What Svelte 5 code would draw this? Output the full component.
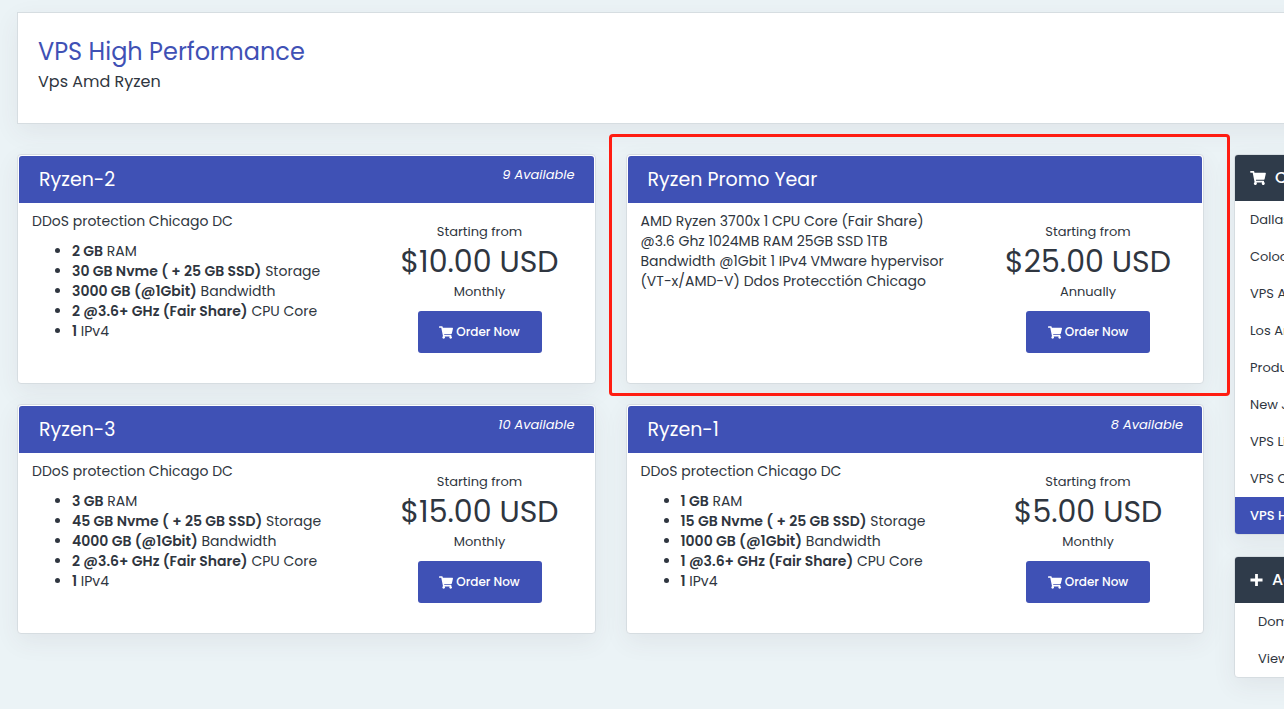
<script lang="ts">
	type Feature = { amount: string; label: string };

	type Product = {
		name: string;
		stock?: number;
		description: string;
		features: Feature[];
		price: string;
		cycle: string;
		promo?: boolean;
	};

	const products: Product[] = [
		{
			name: 'Ryzen-2',
			stock: 9,
			description: 'DDoS protection Chicago DC',
			features: [
				{ amount: '2 GB', label: 'RAM' },
				{ amount: '30 GB Nvme ( + 25 GB SSD)', label: 'Storage' },
				{ amount: '3000 GB (@1Gbit)', label: 'Bandwidth' },
				{ amount: '2 @3.6+ GHz (Fair Share)', label: 'CPU Core' },
				{ amount: '1', label: 'IPv4' }
			],
			price: '$10.00 USD',
			cycle: 'Monthly'
		},
		{
			name: 'Ryzen Promo Year',
			description:
				'AMD Ryzen 3700x 1 CPU Core (Fair Share)\n@3.6 Ghz 1024MB RAM 25GB SSD 1TB\nBandwidth @1Gbit 1 IPv4 VMware hypervisor\n(VT-x/AMD-V) Ddos Protecctión Chicago',
			features: [],
			price: '$25.00 USD',
			cycle: 'Annually',
			promo: true
		},
		{
			name: 'Ryzen-3',
			stock: 10,
			description: 'DDoS protection Chicago DC',
			features: [
				{ amount: '3 GB', label: 'RAM' },
				{ amount: '45 GB Nvme ( + 25 GB SSD)', label: 'Storage' },
				{ amount: '4000 GB (@1Gbit)', label: 'Bandwidth' },
				{ amount: '2 @3.6+ GHz (Fair Share)', label: 'CPU Core' },
				{ amount: '1', label: 'IPv4' }
			],
			price: '$15.00 USD',
			cycle: 'Monthly'
		},
		{
			name: 'Ryzen-1',
			stock: 8,
			description: 'DDoS protection Chicago DC',
			features: [
				{ amount: '1 GB', label: 'RAM' },
				{ amount: '15 GB Nvme ( + 25 GB SSD)', label: 'Storage' },
				{ amount: '1000 GB (@1Gbit)', label: 'Bandwidth' },
				{ amount: '1 @3.6+ GHz (Fair Share)', label: 'CPU Core' },
				{ amount: '1', label: 'IPv4' }
			],
			price: '$5.00 USD',
			cycle: 'Monthly'
		}
	];

	const categories = [
		'Dallas Dedicated',
		'Colocation',
		'VPS Atlanta',
		'Los Angeles',
		'Product Addons',
		'New Jersey',
		'VPS Linux',
		'VPS Chicago',
		'VPS High Performance'
	];

	const actions = ['Domain Renewals', 'View Cart'];

	let current = $state('VPS High Performance');
</script>

{#snippet cart()}
	<svg class="icon" viewBox="0 0 576 512" aria-hidden="true">
		<path
			d="M528.12 301.319l47.273-208C578.806 78.301 567.391 64 551.99 64H159.208l-9.166-44.81C147.758 8.021 137.93 0 126.529 0H24C10.745 0 0 10.745 0 24v16c0 13.255 10.745 24 24 24h69.883l70.248 343.435C147.325 417.1 136 435.222 136 456c0 30.928 25.072 56 56 56s56-25.072 56-56c0-15.674-6.447-29.835-16.824-40h209.647C430.447 426.165 424 440.326 424 456c0 30.928 25.072 56 56 56s56-25.072 56-56c0-22.172-12.888-41.332-31.579-50.405l5.517-24.276c3.413-15.018-8.002-29.319-23.403-29.319H218.117l-6.545-32h293.145c11.206 0 20.92-7.754 23.403-18.681z"
		/>
	</svg>
{/snippet}

<div class="page">
	<div class="layout">
		<header class="intro">
			<h1>VPS High Performance</h1>
			<p>Vps Amd Ryzen</p>
		</header>

		<main class="products">
			{#each products as product (product.name)}
				<section class="product" class:promo={product.promo}>
					<div class="product-header">
						<h2>{product.name}</h2>
						{#if product.stock}
							<em>{product.stock} Available</em>
						{/if}
					</div>
					<div class="product-body">
						<div class="details">
							<p>{product.description}</p>
							{#if product.features.length > 0}
								<ul>
									{#each product.features as feature}
										<li><strong>{feature.amount}</strong> {feature.label}</li>
									{/each}
								</ul>
							{/if}
						</div>
						<div class="pricing">
							<span>Starting from</span>
							<span class="price">{product.price}</span>
							<span>{product.cycle}</span>
							<a class="order" href="#order">{@render cart()} Order Now</a>
						</div>
					</div>
				</section>
			{/each}
		</main>

		<aside class="sidebar">
			<nav class="panel categories">
				<h3>{@render cart()} Categories</h3>
				{#each categories as category}
					<a
						href="#category"
						class:active={category === current}
						onclick={() => (current = category)}>{category}</a
					>
				{/each}
			</nav>
			<nav class="panel actions">
				<h3>
					<svg class="icon plus" viewBox="0 0 14 14" aria-hidden="true">
						<path d="M5.5 .5h3v5h5v3h-5v5h-3v-5h-5v-3h5z" />
					</svg>
					Actions
				</h3>
				{#each actions as action}
					<a href="#action">{action}</a>
				{/each}
			</nav>
		</aside>
	</div>
</div>

<style>
	:global(body) {
		margin: 0;
		background: #ebf3f6;
	}

	.page {
		min-height: 100vh;
		box-sizing: border-box;
		padding: 12px 0 30px 17px;
		overflow: hidden;
		font-family: Poppins, Inter, 'Open Sans', sans-serif;
		font-size: 14px;
		font-weight: 400;
		line-height: 20px;
		color: #2f3640;
	}

	/* the sidebar runs past the right edge of the window */
	.layout {
		display: grid;
		grid-template-columns: minmax(0, 1fr) 280px;
		gap: 30px;
		margin-right: -230px;
	}

	h1,
	h2,
	h3,
	p,
	ul {
		margin: 0;
		font-weight: inherit;
	}

	a {
		color: inherit;
		text-decoration: none;
	}

	.icon {
		width: 14px;
		height: 13px;
		fill: currentColor;
		flex: none;
	}

	.intro,
	.product,
	.panel {
		background: #fff;
		border: 1px solid #d6dde1;
		box-shadow: 0 8px 24px rgba(80, 60, 70, 0.07);
	}

	.intro {
		grid-column: 1 / -1;
		padding: 24px 20px 29px;
	}

	.intro h1 {
		font-size: 24px;
		line-height: 30px;
		color: #3f51b5;
	}

	.intro p {
		font-size: 16px;
		line-height: 24px;
		padding-top: 3px;
	}

	.products {
		display: grid;
		grid-template-columns: 1fr 1fr;
		align-content: start;
		gap: 20px 30px;
	}

	.product {
		position: relative;
		padding: 1px;
		border-radius: 4px;
	}

	.promo::after {
		content: '';
		position: absolute;
		z-index: 1;
		inset: -21px -27px -13px -18px;
		border: 3px solid #ff1d12;
		border-radius: 4px;
		pointer-events: none;
	}

	.product-header {
		display: flex;
		justify-content: space-between;
		padding: 9px 19px 8px 20px;
		border-radius: 3px 3px 0 0;
		background: #3f51b5;
		color: #fff;
	}

	.product-header h2 {
		font-size: 19px;
		font-weight: 400;
		line-height: 30px;
	}

	.product-header em {
		font-size: 13px;
		font-weight: 400;
	}

	.product-body {
		display: flex;
		padding: 8px 12px 29px 13px;
	}

	.details {
		flex: 1;
		white-space: pre-line;
	}

	.details ul {
		margin-top: 10px;
		padding-left: 40px;
	}

	.details strong {
		font-weight: 600;
	}

	.pricing {
		display: flex;
		flex-direction: column;
		align-items: center;
		width: 204px;
		padding-top: 11px;
		font-size: 13px;
	}

	.price {
		font-size: 30px;
		line-height: 40px;
	}

	.order {
		display: flex;
		align-items: center;
		justify-content: center;
		gap: 3px;
		box-sizing: border-box;
		width: 124px;
		height: 42px;
		margin-top: 9px;
		border-radius: 3px;
		background: #3f51b5;
		color: #fff;
		font-size: 12px;
		font-weight: 500;
	}

	.panel {
		margin-bottom: 21px;
		border-radius: 4px;
		overflow: hidden;
	}

	.panel h3 {
		display: flex;
		align-items: center;
		gap: 9px;
		padding: 13px 15px;
		background: #2f3b4a;
		color: #fff;
		font-size: 16px;
		font-weight: 500;
	}

	.panel .icon {
		width: 16px;
		height: 14px;
	}

	.panel .plus {
		width: 13px;
	}

	.panel a {
		display: block;
		padding: 9px 15px 8px;
		font-size: 13px;
	}

	.panel .active {
		background: #3f51b5;
		color: #fff;
		font-weight: 500;
	}

	.actions a {
		padding-left: 23px;
	}
</style>
